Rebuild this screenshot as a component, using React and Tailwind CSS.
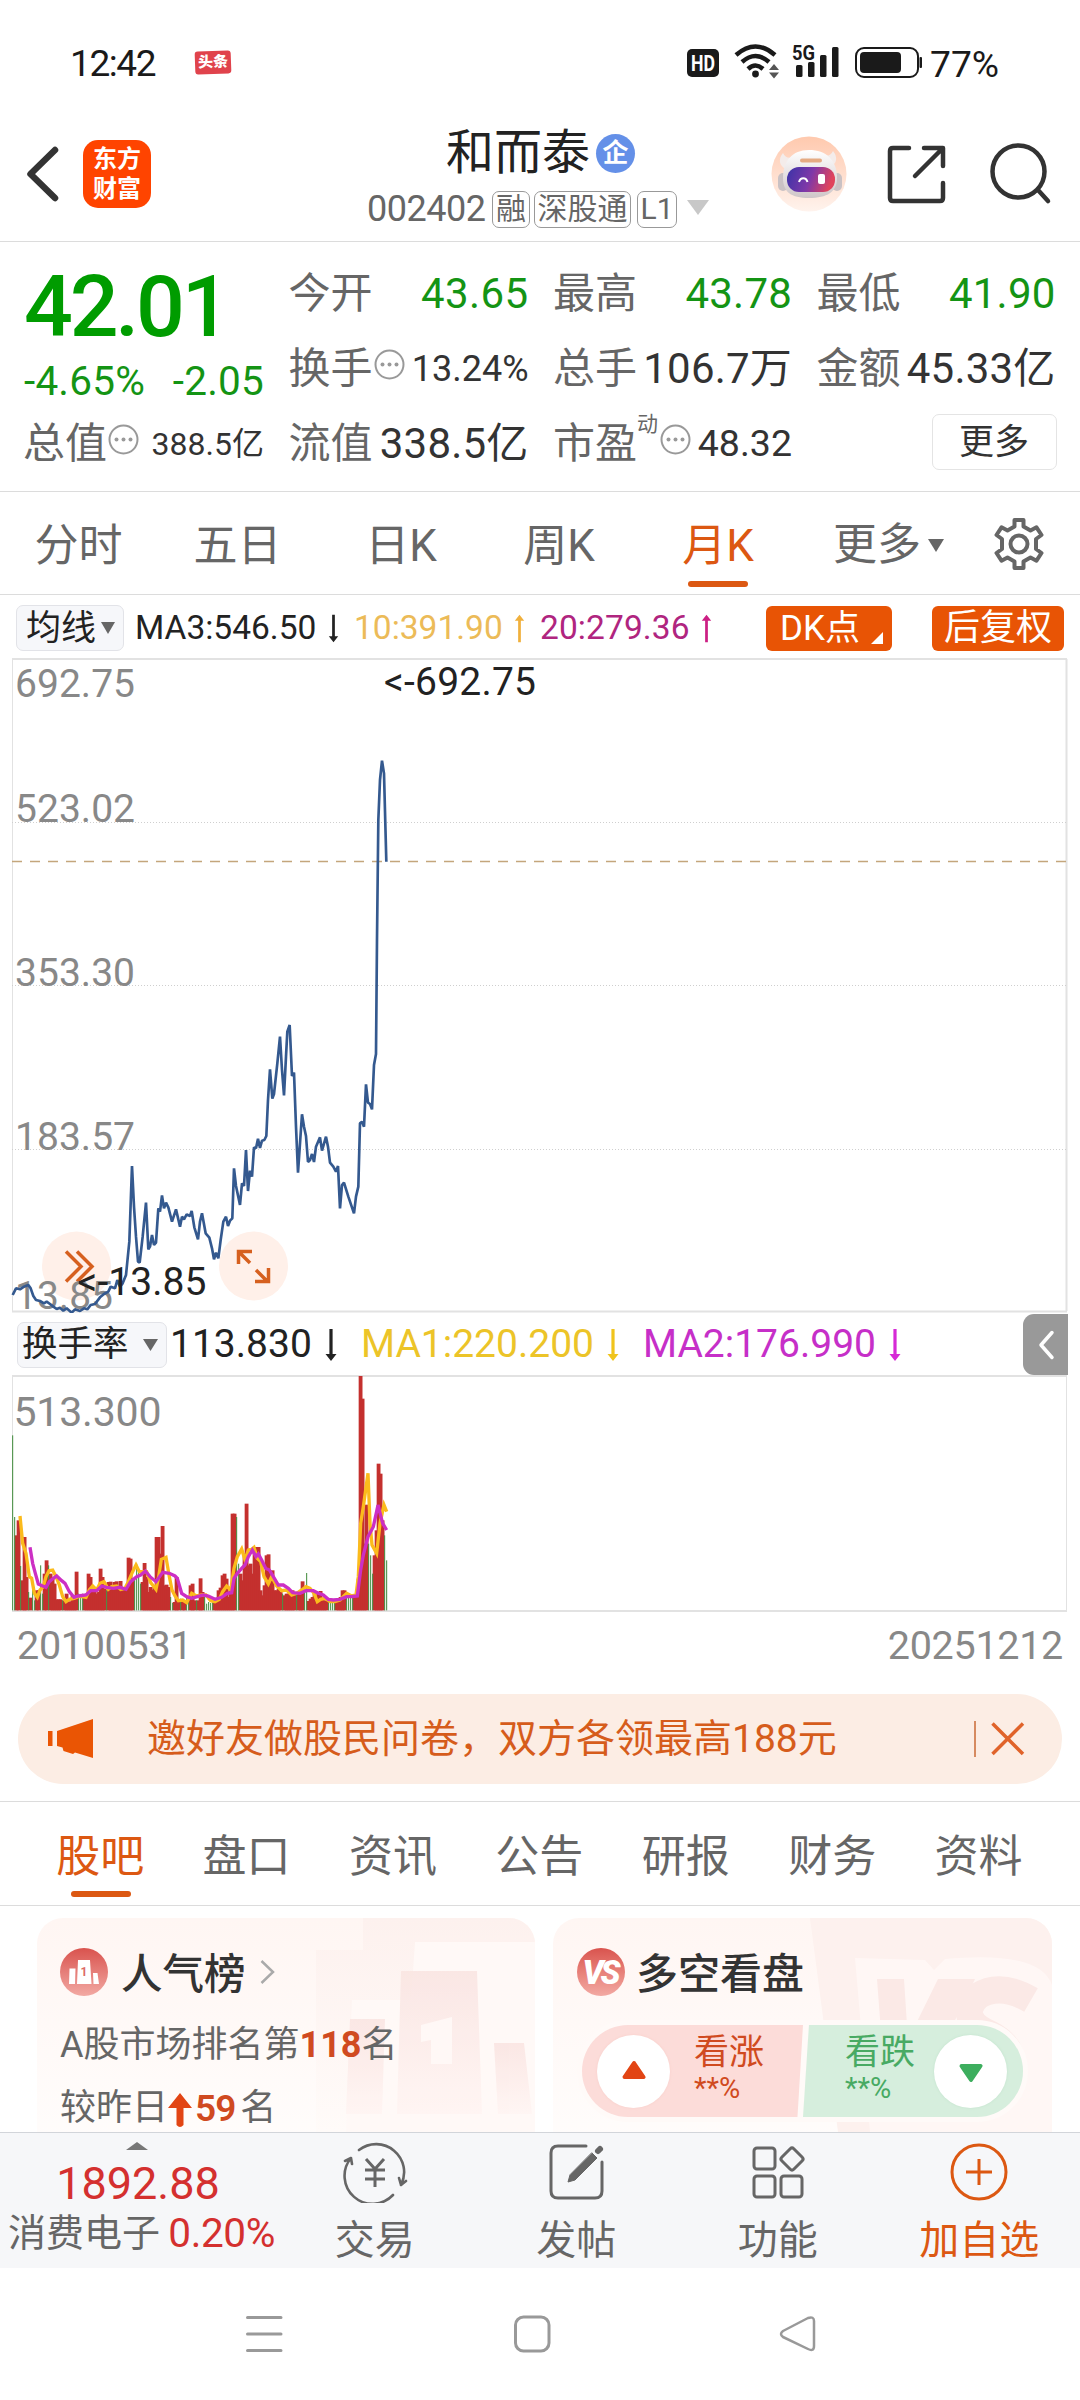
// monthly closes, drawn at 3x and scaled down
const priceLine =
  '38,1065 48,1045 60,1048 72,1040 85,1035 92,1045 100,1068 108,1080 120,1083 132,1090 140,1085 150,1092 160,1100 170,1107 180,1103 190,1112 200,1105 215,1118 225,1108 240,1113 252,1105 262,1108 272,1095 285,1092 300,1072 312,1062 325,1055 332,1040 345,1045 352,1020 360,1040 368,1030 378,1005 388,905 396,678 402,800 408,890 414,965 419,968 428,890 438,788 445,928 450,920 456,885 462,915 468,908 475,805 480,815 486,766 492,805 498,788 505,802 516,845 528,808 540,860 546,830 552,838 560,823 570,828 575,813 583,862 594,898 600,845 606,820 617,880 628,893 636,925 642,958 648,938 655,955 662,900 670,845 678,830 684,858 690,842 697,835 702,685 708,738 720,795 726,730 732,738 738,630 744,753 750,692 756,710 762,622 768,625 774,596 780,624 786,602 793,600 799,588 804,480 810,388 817,476 822,462 832,370 840,290 846,390 852,466 858,350 862,275 869,255 876,408 882,398 888,560 894,698 900,610 906,523 912,560 918,588 924,666 930,660 936,642 942,666 948,620 960,592 966,632 978,590 984,620 990,668 1000,680 1008,695 1014,678 1020,805 1026,735 1032,728 1045,770 1062,820 1068,770 1075,740 1080,550 1086,545 1092,560 1098,433 1104,488 1110,492 1116,508 1122,375 1128,342 1131,0 1135,-360 1140,-480 1146,-538 1152,-500 1159,-235'

// one value per month, negative = falling month (green)
const turnover = [
  -525, -280, 225, 270, -133, 90, 220, 100, -55, 38, -70, -30, 60, 60, -135, -50, 110, 150, -135, 110,
  100, 80, 33, 33, 33, -30, 30, 50, 25, 27, 45, 40, 116, -50, -40, -50, 45, 50, 110, 100,
  60, 60, 50, 55, 125, 100, 65, -60, 85, 86, 70, 85, 87, 70, 88, 60, 65, 62, 158, 155,
  95, -100, -140, -125, -80, 85, 142, 100, 55, 70, 62, 75, 220, 220, 170, 253, 75, 77, 70, -40,
  -22, 25, 100, 30, -35, 30, 30, -45, -25, 75, 80, 30, -30, 30, 96, 55, -40, -20, -25, -22,
  -25, 30, 35, 60, 68, 105, 110, 95, 40, 60, 290, 290, -280, -140, 110, 90, 170, 320, 135, 140,
  110, 185, 190, 190, 60, 45, 75, 165, 168, 115, 120, 60, 60, 65, 55, -50, 45, 50, 50, 50,
  60, 50, -55, 50, 60, 87, -60, -112, 28, 35, 40, 55, 30, 55, 58, 35, 30, 28, -30, -25,
  -22, -22, 25, 35, 40, 60, 60, -55, -50, -45, -40, 40, 45, 95, 703, 635, 200, 317, -200, -165,
  -110, 165, 240, 440, 410, 270, -225, -150,
]

const ma1Line =
  '60,618 68,700 78,730 88,800 95,805 103,850 112,862 120,840 130,830 138,800 147,782 158,780 168,800 178,825 188,860 198,875 208,868 222,865 235,860 245,860 258,862 268,840 278,828 290,840 300,820 312,815 325,838 335,830 350,828 362,838 375,835 385,815 398,785 408,765 418,785 428,785 440,785 452,818 462,830 468,838 476,800 484,748 498,742 508,800 516,840 525,858 535,872 548,870 560,878 575,850 590,858 605,855 618,855 632,872 645,875 658,868 668,845 680,828 692,840 702,775 712,740 725,717 735,750 745,720 755,718 762,712 772,745 782,755 792,800 805,822 815,800 830,828 845,842 860,840 875,855 890,850 905,840 918,830 930,835 942,850 952,875 962,868 975,865 990,875 1005,875 1020,870 1040,850 1055,858 1068,855 1075,800 1082,640 1090,590 1104,490 1110,640 1116,705 1130,730 1140,640 1152,585 1160,605'
const ma2Line =
  '90,712 98,760 106,790 115,822 128,828 138,832 148,815 160,805 170,798 185,812 195,820 208,845 222,862 235,858 258,855 272,842 290,842 305,828 320,832 340,835 360,832 378,838 392,815 410,800 422,795 436,783 450,800 468,815 488,787 508,790 525,798 532,805 545,850 560,860 575,865 592,860 610,855 625,858 645,868 665,862 682,850 695,848 702,805 712,790 725,775 735,765 745,740 757,720 768,740 775,732 785,750 797,775 808,780 820,800 835,825 850,825 865,835 878,848 900,850 918,842 940,842 955,850 970,855 985,868 1000,870 1020,868 1040,860 1055,860 1072,858 1082,780 1090,735 1104,680 1120,650 1134,585 1148,640 1160,660'

const chartTabs = [
  { label: '分时', width: 'w-[157px]' },
  { label: '五日', width: 'w-[161px]' },
  { label: '日K', width: 'w-[166px]' },
  { label: '周K', width: 'w-[150px]' },
  { label: '月K', width: 'w-[168px]', active: true },
]

const infoTabs = ['股吧', '盘口', '资讯', '公告', '研报', '财务', '资料']

function StatusBar() {
  return (
    <div className="flex h-[84px] items-end">
      <div className="ml-[70px] w-[125px] text-[37px] leading-[40px] tracking-[-1.4px] text-[#1a1a1a]">12:42</div>
      <div className="mb-[10px] flex h-[23px] w-[36px] -rotate-2 items-center justify-center rounded-[3px] bg-[#e0434c] text-[15px] font-black leading-none text-white">头条</div>
      <svg className="ml-[456px]" width="322" height="84" viewBox="687 0 322 84" fill="#1a1a1a">
        <rect x="687" y="49" width="32" height="28" rx="5" />
        <text x="703" y="71" textAnchor="middle" fill="#fff" fontSize="22" fontWeight="700" textLength="24" lengthAdjust="spacingAndGlyphs">HD</text>
        <g fill="none" stroke="#1a1a1a" strokeWidth="4.500">
          <path d="M736 55 Q755.500 38 775 55" />
          <path d="M742 62 Q755.500 50 769 62" />
          <path d="M748 69 Q755.500 62 763 69" />
        </g>
        <circle cx="755.5" cy="74" r="3.4" />
        <path d="M769 70l5-6 5 6zM769 72.500l5 6 5-6z" fill="#555" />
        <text x="792" y="60" fontSize="20" fontWeight="700" textLength="23" lengthAdjust="spacingAndGlyphs">5G</text>
        <rect x="796" y="65" width="6.500" height="12" rx="1.500" />
        <rect x="808" y="62" width="6.500" height="15" rx="1.500" />
        <rect x="820" y="55" width="6.500" height="22" rx="1.500" />
        <rect x="832" y="47" width="6.500" height="30" rx="1.500" />
        <rect x="856" y="48" width="62" height="29" rx="8" fill="none" stroke="#1a1a1a" strokeWidth="2" />
        <rect x="860" y="52" width="41" height="21" rx="4" />
        <rect x="919.500" y="57" width="2.500" height="11" rx="1" />
        <text x="930" y="76.500" fontSize="37.500" textLength="69" lengthAdjust="spacingAndGlyphs">77%</text>
      </svg>
    </div>
  )
}

function RobotAvatar() {
  return (
    <svg width="76" height="76" viewBox="0 0 76 76">
      <defs>
        <linearGradient id="robotBg" x1="0" y1="0" x2="0" y2="1">
          <stop offset="0" stopColor="#ffc9ae" />
          <stop offset="1" stopColor="#fff3ed" />
        </linearGradient>
        <linearGradient id="visor" x1="0" y1="0" x2="1" y2="0.2">
          <stop offset="0" stopColor="#3a33a8" />
          <stop offset="0.55" stopColor="#7f38a8" />
          <stop offset="1" stopColor="#e0435c" />
        </linearGradient>
        <linearGradient id="helmet" x1="0" y1="0" x2="0" y2="1">
          <stop offset="0" stopColor="#ffffff" />
          <stop offset="1" stopColor="#cfc6c8" />
        </linearGradient>
      </defs>
      <circle cx="38" cy="38" r="37.500" fill="url(#robotBg)" />
      <path d="M12 17c-5 6-4 13 3 16l8-12c-6 2-9 0-11-4zM62 15c5 6 4 13-3 16l-8-12c6 2 9 0 11-4z" fill="#f4ecea" />
      <rect x="7" y="37" width="10" height="18" rx="5" fill="#c9c1c4" />
      <rect x="61" y="37" width="10" height="18" rx="5" fill="#c9c1c4" />
      <path d="M12 42c0-17 9-28 26-28s28 10 28 28c0 14-10 20-28 20S12 56 12 42z" fill="url(#helmet)" />
      <rect x="29" y="22.500" width="22" height="4" rx="2" fill="#e5ab83" />
      <rect x="16" y="31" width="48" height="25" rx="12" fill="url(#visor)" />
      <path d="M28 46c1.500-5 7-5 8.500 0" fill="none" stroke="#fff" strokeWidth="2" />
      <rect x="47" y="38" width="7" height="10" rx="2" fill="#fff" />
    </svg>
  )
}

function Header() {
  return (
    <div className="flex h-[158px] border-b border-[#dcdcdc]">
      <svg className="ml-[22px] mt-[56px]" width="42" height="68" viewBox="0 0 42 68" fill="none" stroke="#333" strokeWidth="6.500" strokeLinecap="round" strokeLinejoin="round">
        <path d="M33 10L8.500 34L33 58" />
      </svg>
      <div className="ml-[19px] mt-[56px] flex h-[68px] w-[68px] flex-col items-center justify-center rounded-[15px] bg-[#ff4400] text-[24px] font-bold leading-[30px] text-white">
        <span>东方</span>
        <span>财富</span>
      </div>
      <div className="ml-[217px] mt-[42px] w-[350px]">
        <div className="flex h-[54px] items-center pl-[78px]">
          <span className="text-[48px] leading-none text-[#222]">和而泰</span>
          <span className="ml-[6px] flex h-[39px] w-[39px] items-center justify-center rounded-full bg-[#6490e8] text-[26px] font-bold leading-none text-white">企</span>
        </div>
        <div className="mt-[10px] flex h-[38px] items-center text-[30px] leading-none text-[#666]">
          <span className="-ml-px w-[125px] text-[36px] tracking-[-0.5px]">002402</span>
          <span className="flex h-[37px] w-[38px] items-center justify-center rounded-[7px] border border-[#999]">融</span>
          <span className="ml-[4px] flex h-[37px] w-[97px] items-center justify-center whitespace-nowrap rounded-[7px] border border-[#999]">深股通</span>
          <span className="ml-[6px] flex h-[37px] w-[40px] items-center justify-center rounded-[7px] border border-[#999]">L1</span>
          <svg className="ml-[10px] mt-[-3px]" width="22" height="15" fill="#c8c8c8"><path d="M0 0H22L11 15z" /></svg>
        </div>
      </div>
      <div className="ml-[53px] mt-[52px]"><RobotAvatar /></div>
      <svg className="ml-[38px] mt-[58px]" width="64" height="64" viewBox="885 142 64 64" fill="none" stroke="#333" strokeWidth="4.500" strokeLinecap="round" strokeLinejoin="round">
        <path d="M909 148H893Q890 148 890 151V198Q890 201 893 201H940Q943 201 943 198V183M924 148H943V166M942 149L915 176" />
      </svg>
      <svg className="ml-[37px] mt-[58px]" width="68" height="64" viewBox="986 142 68 64" fill="none" stroke="#333" strokeWidth="4.500" strokeLinecap="round">
        <circle cx="1018.500" cy="171.500" r="26" />
        <path d="M1038 190L1048 201" />
      </svg>
    </div>
  )
}

function Hint() {
  return (
    <svg className="mb-[8px] ml-px shrink-0" width="31" height="31" viewBox="0 0 31 31">
      <circle cx="15.500" cy="15.500" r="14" fill="none" stroke="#999" strokeWidth="2" />
      <g fill="#999"><circle cx="8.500" cy="15.500" r="2" /><circle cx="15.500" cy="15.500" r="2" /><circle cx="22.500" cy="15.500" r="2" /></g>
    </svg>
  )
}

function Stat({ label, children, hint, valueClass }) {
  return (
    <div className="flex h-[75px] items-center justify-between leading-none">
      <span className="-ml-px flex items-center whitespace-nowrap text-[42px] text-[#666]">
        {label}
        {hint && <Hint />}
      </span>
      <span className={valueClass}>{children}</span>
    </div>
  )
}

function Quote() {
  return (
    <div className="grid h-[250px] grid-cols-[240px_239px_238px_238px] gap-x-[25.500px] border-b border-[#dcdcdc] pl-[24px] pt-[14px] whitespace-nowrap">
      <div>
        <div className="flex h-[101px] items-center text-[86px] font-medium leading-none tracking-[-3.2px] text-[#009c00]">42.01</div>
        <div className="flex h-[49px] items-center justify-between text-[40.500px] leading-none tracking-[0.2px] text-[#149414]">
          <span>-4.65%</span>
          <span>-2.05</span>
        </div>
        <Stat label="总值" hint valueClass="text-[32px] text-[#333]">388.5亿</Stat>
      </div>
      <div>
        <Stat label="今开" valueClass="text-[42px] text-[#149414] tracking-[0.4px]">43.65</Stat>
        <Stat label="换手" hint valueClass="text-[36px] text-[#333]">13.24%</Stat>
        <Stat label="流值" valueClass="text-[42px] text-[#333] tracking-[0.2px]">338.5亿</Stat>
      </div>
      <div>
        <Stat label="最高" valueClass="text-[42px] text-[#149414] tracking-[0.2px]">43.78</Stat>
        <Stat label="总手" valueClass="text-[42px] text-[#333] tracking-[0.2px]">106.7万</Stat>
        <Stat label={<>市盈<span className="mb-[38px] w-[22px] text-[21px]">动</span></>} hint valueClass="text-[37.500px] text-[#333]">48.32</Stat>
      </div>
      <div>
        <Stat label="最低" valueClass="text-[42px] text-[#149414] tracking-[0.2px]">41.90</Stat>
        <Stat label="金额" valueClass="text-[42px] text-[#333] tracking-[0.2px]">45.33亿</Stat>
        <div className="flex h-[72px] items-center justify-end">
          <div className="-mr-[1px] flex h-[56px] w-[125px] items-center justify-center rounded-[7px] border border-[#e4e4e4] text-[35px] leading-none text-[#333]">更多</div>
        </div>
      </div>
    </div>
  )
}

function ChartTabs() {
  return (
    <div className="flex h-[103px] border-b border-[#dcdcdc] text-[44px] leading-none text-[#666]">
      {chartTabs.map((t) => (
        <div key={t.label} className={`${t.width} flex shrink-0 flex-col items-center justify-between pb-[7px] pt-[32px]`}>
          <span className={t.active ? 'text-[#dc5812]' : ''}>{t.label}</span>
          {t.active && <span className="mr-[1px] h-[6px] w-[60px] rounded-full bg-[#dc5812]" />}
        </div>
      ))}
      <div className="ml-[31px] flex h-[106px] items-center">
        <span>更多</span>
        <svg className="ml-[7px]" width="16" height="13" fill="#666"><path d="M0 0H16L8 13z" /></svg>
      </div>
      <svg className="ml-[48px] mt-[25px]" width="54" height="54" viewBox="0 0 54 54" fill="none" stroke="#666" strokeWidth="4" strokeLinejoin="round">
        <path d="M22.500 3h9v6.500l7 4 6-3.200 5 7.700-5.500 4v10l5.500 4-5 7.700-6-3.200-7 4V51h-9v-6.500l-7-4-6 3.200-5-7.700 5.500-4V22L4.500 18l5-7.700 6 3.200 7-4z" />
        <circle cx="27" cy="27" r="8.500" />
      </svg>
    </div>
  )
}

function Arrow({ up, className }) {
  return (
    <svg className={className} width="12" height="34" viewBox="0 0 12 34">
      <g transform={up ? 'rotate(180 6 17)' : undefined}>
        <path d="M4.400 1h3.200v26H4.400zM0.500 26h11L6 33z" fill="currentColor" />
      </g>
    </svg>
  )
}

function MaBar() {
  return (
    <div className="flex h-[62px] items-center whitespace-nowrap pl-[16px] pt-[2px] text-[33.500px] leading-none">
      <div className="flex h-[46px] w-[108px] items-center rounded-[7px] border border-[#e2e3e8] bg-[#f6f7fa] pl-[9px] text-[35px] text-[#222]">
        均线
        <svg className="ml-[5px]" width="14" height="12" fill="#666"><path d="M0 0H14L7 12z" /></svg>
      </div>
      <span className="ml-[11px] w-[193px] text-[#222]">MA3:546.50</span>
      <Arrow className="h-[29px] w-[11px] text-[#222]" />
      <span className="ml-[15px] w-[160px] text-[#ecbb58]">10:391.90</span>
      <Arrow up className="h-[29px] w-[11px] text-[#f0b03c]" />
      <span className="ml-[15px] w-[161px] tracking-[0.100px] text-[#b0257f]">20:279.36</span>
      <Arrow up className="h-[29px] w-[11px] text-[#cc1f84]" />
      <div className="ml-[54px] flex h-[45px] w-[126px] items-center rounded-[6px] bg-[#e85405] pl-[14px] text-[35px] text-white">
        DK点
        <svg className="ml-[11px] mt-[20px]" width="12" height="12" fill="#fff"><path d="M12 0V12H0z" /></svg>
      </div>
      <div className="ml-[40px] flex h-[45px] w-[132px] items-center justify-center rounded-[6px] bg-[#e85405] text-[36px] text-white">后复权</div>
    </div>
  )
}

function PriceChart() {
  return (
    <svg className="block" width="1080" height="655" viewBox="0 658 1080 655">
      <g stroke="#e2e2e2" strokeWidth="2" fill="none">
        <path d="M12 659H1067M12 1311.500H1067M1066.500 659V1311" />
        <path d="M12.500 659V1311" strokeWidth="1" />
      </g>
      <g stroke="#cfcfcf" strokeWidth="1" strokeDasharray="1 2">
        <path d="M12 822.500H1067M12 985.500H1067M12 1149.500H1067" />
      </g>
      <path d="M12 861.500H1066" stroke="#c4a67c" strokeWidth="1.300" strokeDasharray="10 8" />
      <circle cx="76.500" cy="1266" r="34.500" fill="#fff0e9" />
      <circle cx="253.500" cy="1266" r="34.500" fill="#fff0e9" />
      <g fill="none" stroke="#d6601f" strokeWidth="3.500">
        <path d="M66 1251.500L81 1266.500L66 1281.500M77 1251.500L92 1266.500L77 1281.500" />
        <path d="M238.500 1264V1251.500H252M239 1252L250 1263M256 1270L268 1282M255 1281.500H268.500V1268" />
      </g>
      <g fill="#888" fontSize="39">
        <text x="15" y="697" textLength="120">692.75</text>
        <text x="15" y="822" textLength="120">523.02</text>
        <text x="15" y="986" textLength="120">353.30</text>
        <text x="15" y="1150" textLength="120">183.57</text>
        <text x="15" y="1308.500" textLength="98">13.85</text>
      </g>
      <polyline transform="translate(0 940) scale(0.33333)" points={priceLine} fill="none" stroke="#34598f" strokeWidth="8" strokeLinejoin="bevel" />
      <g fill="#222" fontSize="39">
        <text x="384" y="695" textLength="152">&lt;-692.75</text>
        <text x="77.500" y="1295" textLength="129">&lt;-13.85</text>
      </g>
    </svg>
  )
}

function IndicatorBar() {
  return (
    <div className="flex h-[62px] items-center whitespace-nowrap pl-[17px] pt-px text-[39px] leading-none">
      <div className="flex h-[46px] w-[150px] items-center rounded-[7px] border border-[#e2e3e8] bg-[#f6f7fa] pl-[4px] text-[35.500px] text-[#222]">
        换手率
        <svg className="ml-[14px]" width="15" height="12" fill="#666"><path d="M0 0H15L7.500 12z" /></svg>
      </div>
      <span className="ml-[3px] w-[155px] text-[#222]">113.830</span>
      <Arrow className="text-[#222]" />
      <span className="ml-[24px] w-[246px] text-[#ecc428]">MA1:220.200</span>
      <Arrow className="text-[#f0c41c]" />
      <span className="ml-[24px] w-[246px] text-[#c62fc8]">MA2:176.990</span>
      <Arrow className="text-[#d62ad6]" />
      <div className="ml-[122px] flex h-[61px] w-[45px] items-center justify-center rounded-l-[11px] bg-[#999]">
        <svg width="18" height="30" viewBox="0 0 18 30" fill="none" stroke="#fff" strokeWidth="3.500" strokeLinecap="round" strokeLinejoin="round"><path d="M15 2.500L4 15L15 27.500" /></svg>
      </div>
    </div>
  )
}

function TurnoverChart() {
  return (
    <svg className="block" width="1080" height="238" viewBox="0 1375 1080 238">
      <g stroke="#e2e2e2" strokeWidth="2" fill="none">
        <path d="M12 1376H1067M12 1611H1067" />
        <path d="M12.500 1376V1611M1066.500 1376V1611" strokeWidth="1" />
      </g>
      <text x="13.500" y="1426" fill="#888" fontSize="41" textLength="148">513.300</text>
      <g transform="translate(0 1310) scale(0.33333)">
        {turnover.map((v, i) =>
          v > 0 ? <rect key={i} x={32 + 6 * i} y={901 - v} width="11.500" height={v} fill="#c4302e" /> : null
        )}
        {turnover.map((v, i) =>
          v < 0 ? <rect key={i} x={36.500 + 6 * i} y={901 + v} width="3" height={-v} fill="#3f8a3a" /> : null
        )}
        <polyline points={ma1Line} fill="none" stroke="#fbbb1c" strokeWidth="10" />
        <polyline points={ma2Line} fill="none" stroke="#cc2fc4" strokeWidth="10" />
      </g>
    </svg>
  )
}

function Banner() {
  return (
    <div className="mx-[18px] flex h-[90px] items-center rounded-full bg-[#fcede4] text-[39px] leading-none text-[#d65c1b]">
      <svg className="ml-[30px]" width="46" height="40" viewBox="0 0 46 40" fill="#ea5504">
        <rect x="0" y="12" width="4.500" height="15" />
        <path d="M9 12L45 0V39L27 33.500L25 35L15.500 32L14.500 28.500L9 27z" />
      </svg>
      <span className="ml-[53px] w-[827px] whitespace-nowrap">邀好友做股民问卷，双方各领最高188元</span>
      <span className="h-[36px] w-[1.500px] bg-[#d68a60]" />
      <svg className="ml-[15px]" width="34" height="34" viewBox="0 0 34 34" stroke="#e0632a" strokeWidth="3.500"><path d="M1.500 1.500L32 32M32 1.500L1.500 32" /></svg>
    </div>
  )
}

function InfoTabs() {
  return (
    <div className="mt-[17px] flex h-[105px] border-y border-[#dcdcdc] pl-[27px] text-[44px] leading-none text-[#666]">
      {infoTabs.map((t, i) => (
        <div key={t} className="flex w-[146.400px] flex-col items-center justify-between pb-[8px] pt-[33px]">
          <span className={i === 0 ? 'text-[#dc5812]' : ''}>{t}</span>
          {i === 0 && <span className="ml-[2px] h-[6px] w-[60px] rounded-full bg-[#dc5812]" />}
        </div>
      ))}
    </div>
  )
}

function RankCard() {
  return (
    <div className="relative h-[240px] w-[498px] overflow-hidden rounded-[26px] bg-gradient-to-b from-[#fff6f3] to-[#fffdfc] leading-none text-[#666]">
      <svg className="absolute left-0 top-0" width="498" height="214" viewBox="37 1918 498 214">
        <defs>
          <linearGradient id="rankFade" x1="0" y1="0" x2="0" y2="1">
            <stop offset="0" stopColor="#fae4e1" />
            <stop offset="1" stopColor="#fff5f3" />
          </linearGradient>
          <linearGradient id="rankEdge" x1="0" y1="0" x2="0" y2="1">
            <stop offset="0" stopColor="#fdf1ee" />
            <stop offset="1" stopColor="#fffbf9" />
          </linearGradient>
        </defs>
        <path d="M363 1918H535V2132H316V1950H363z" fill="url(#rankEdge)" />
        <path d="M415 1942H537V2132H346L352 2000H411z" fill="#fff9f7" />
        <path d="M537 1942L542 2020V2132H552V1918H537z" fill="#fdf1ee" />
        <g fill="url(#rankFade)" opacity="0.85">
          <path d="M401 1971H477L482 2114H397z" />
          <path d="M350 2019H385L382 2114H346z" />
          <path d="M494 2043H524L532 2114H498z" />
        </g>
        <path d="M421 2025L452 2017V2064H431V2040L421 2042z" fill="#fff8f6" />
      </svg>
      <div className="relative ml-[23px] mt-[30px] flex h-[48px] items-center">
        <svg width="48" height="48" viewBox="0 0 48 48">
          <defs>
            <linearGradient id="badge" x1="0" y1="0" x2="0" y2="1">
              <stop offset="0" stopColor="#d9534e" />
              <stop offset="1" stopColor="#f2a9a3" />
            </linearGradient>
          </defs>
          <circle cx="24" cy="24" r="24" fill="url(#badge)" />
          <path d="M18 12H30L31.500 36H17zM9.500 20.500H15.500L15 36H9zM33 25H37.500L39 36H33.500z" fill="#fff" />
          <text x="24" y="28" textAnchor="middle" fontSize="12" fontWeight="700" fill="#dd6a64">1</text>
        </svg>
        <span className="ml-[13px] mt-[6px] text-[41.500px] font-medium text-[#333]">人气榜</span>
        <svg className="ml-[14px]" width="15" height="24" viewBox="0 0 15 24" fill="none" stroke="#aaa" strokeWidth="2.500"><path d="M1.500 1L13 12L1.500 23" /></svg>
      </div>
      <div className="relative ml-[23px] mt-[31px] flex h-[36px] items-center whitespace-nowrap text-[36px]">
        A股市场排名第<b className="text-[#d04a20]">118</b>名
      </div>
      <div className="relative ml-[23px] mt-[27px] flex h-[36px] items-center text-[36px]">
        较昨日
        <svg className="mt-[4px]" width="24" height="34" viewBox="0 0 24 34" fill="#e24514"><path d="M12 0L24 15H15.500V32Q12 36 8.500 32V15H0z" /></svg>
        <b className="ml-[3px] text-[37px] font-semibold tracking-[-1px] text-[#d04a20]">59</b>
        <span className="ml-[5px]">名</span>
      </div>
    </div>
  )
}

function VoteCard() {
  return (
    <div className="relative h-[240px] w-[499px] overflow-hidden rounded-[26px] bg-gradient-to-b from-[#fff6f3] to-[#fffdfc] leading-none">
      <svg className="absolute left-0 top-0" width="499" height="214" viewBox="553 1918 499 214">
        <path d="M810 1918H1052V2132H838z" fill="#fdf1ee" />
        <path d="M855 1958L925 1960L934 1970L945 1959Q1040 1950 1052 1985V2132H870z" fill="#fff7f5" />
        {/* oversized mark: slanted V, then the S curve */}
        <path d="M877 1979H904L908 2040L938 1979H975L930 2072H884z" fill="#fbe9e6" />
        <path d="M1031 2000Q1000 1982 978 1996Q956 2018 990 2034Q1020 2050 1008 2076" fill="none" stroke="#fbe9e6" strokeWidth="27" />
      </svg>
      <div className="relative ml-[24px] mt-[30px] flex h-[48px] items-center">
        <span className="flex h-[48px] w-[48px] items-center justify-center rounded-full bg-gradient-to-b from-[#d9534e] to-[#f2a9a3] pr-[2px] text-[33px] font-black italic tracking-[-3px] text-white">VS</span>
        <span className="ml-[11px] mt-[6px] text-[42px] font-medium text-[#333]">多空看盘</span>
      </div>
      <div className="relative ml-[24px] mt-[24px] flex h-[102px] w-[451px] rounded-full border-[5px] border-[#fffaf8] bg-[#fffaf8]">
        <div className="flex w-[221px] items-center rounded-l-full bg-[#fcdcd9] pl-[15px] text-[#d04a20] [clip-path:polygon(0_0,100%_0,97.500%_100%,0_100%)]">
          <span className="flex h-[73px] w-[73px] items-center justify-center rounded-full bg-white shadow-[0_0_3px_#f8cfca]">
            <svg className="mb-[3px]" width="24" height="20" viewBox="0 0 24 20" fill="#e24514" stroke="#e24514" strokeWidth="4" strokeLinejoin="round"><path d="M12 3L21.500 17H2.500z" /></svg>
          </span>
          <span className="mb-[4px] ml-[24px] flex flex-col gap-[4px] text-[35px]">看涨<span className="text-[29px]">**%</span></span>
        </div>
        <div className="flex w-[220px] items-center rounded-r-full bg-[#d6eedd] pl-[42px] text-[#48aa63] [clip-path:polygon(2.700%_0,100%_0,100%_100%,0_100%)]">
          <span className="mb-[4px] flex w-[70px] flex-col gap-[4px] text-[35px]">看跌<span className="text-[29px]">**%</span></span>
          <span className="ml-[19px] flex h-[73px] w-[73px] items-center justify-center rounded-full bg-white shadow-[0_0_3px_#c3e3cd]">
            <svg className="mt-[4px]" width="24" height="20" viewBox="0 0 24 20" fill="#3dae5e" stroke="#3dae5e" strokeWidth="4" strokeLinejoin="round"><path d="M12 17L21.500 3H2.500z" /></svg>
          </span>
        </div>
      </div>
    </div>
  )
}

function Action({ label, active, children }) {
  return (
    <div className={`flex w-[201.500px] flex-col items-center pt-[8px] ${active ? 'text-[#dc5812]' : 'text-[#666]'}`}>
      <svg width="66" height="62" viewBox="-33 -31 66 62" fill="none" stroke="currentColor" strokeWidth="3" strokeLinecap="round" strokeLinejoin="round">{children}</svg>
      <span className="mt-[18px] text-[40px] leading-none">{label}</span>
    </div>
  )
}

function BottomBar() {
  return (
    <div className="flex h-[136px] border-t border-[#d2d5da] bg-[#f6f7f9] leading-none">
      <div className="flex w-[274px] flex-col items-center whitespace-nowrap">
        <svg className="mt-[9px]" width="22" height="8" fill="#777"><path d="M11 0L22 8H0z" /></svg>
        <span className="ml-[2px] mt-[11px] text-[45px] text-[#d4302f]">1892.88</span>
        <div className="mt-[7px] flex w-full items-center justify-between pl-[8px] text-[38px] text-[#666]">
          消费电子<span className="-mr-px text-[40.500px] tracking-[-0.400px] text-[#d4302f]">0.20%</span>
        </div>
      </div>
      <Action label="交易">
        <path d="M-16 -22A28 28 0 0 1 26 13L31 9M26 13L24 6M18 23A28 28 0 0 1 -24 -14L-30 -11M-24 -14L-23 -8" strokeWidth="2.600" />
        <path d="M-9 -13L0 -3L9 -13M0 -3V15M-10 -2H10M-10 7H10" strokeLinecap="butt" />
      </Action>
      <Action label="发帖">
        <path d="M10 -26H-18Q-25 -26 -25 -19V19Q-25 26 -18 26H19Q26 26 26 19V-10" />
        <path d="M16 -19L21 -14L-1 8L-8 10L-6 3z" fill="currentColor" strokeWidth="1" />
        <path d="M22 -21L24 -23" strokeWidth="6" />
      </Action>
      <Action label="功能">
        <rect x="-24" y="-24" width="21" height="21" rx="3" />
        <rect x="-24" y="4" width="21" height="21" rx="3" />
        <rect x="3" y="4" width="21" height="21" rx="3" />
        <rect x="5.500" y="-21.500" width="17" height="17" rx="2.500" transform="rotate(45 14 -13)" />
      </Action>
      <Action label="加自选" active>
        <circle cx="0" cy="0" r="27" />
        <path d="M-13 0H13M0 -13V13" strokeLinecap="butt" />
      </Action>
    </div>
  )
}

export default function App() {
  return (
    <div className="flex h-[2400px] w-[1080px] flex-col overflow-hidden bg-white font-['Roboto','Noto_Sans_CJK_SC',sans-serif]">
      <StatusBar />
      <Header />
      <Quote />
      <ChartTabs />
      <div className="h-[1px]" />
      <MaBar />
      <PriceChart />
      <IndicatorBar />
      <TurnoverChart />
      <div className="flex h-[81px] items-center justify-between pb-[16px] pl-[17px] pr-[17px] text-[39.500px] leading-none tracking-[-0.300px] text-[#888]">
        <span>20100531</span>
        <span>20251212</span>
      </div>
      <Banner />
      <InfoTabs />
      <div className="flex h-[226px] gap-[18px] overflow-hidden pl-[37px] pt-[12px]">
        <RankCard />
        <VoteCard />
      </div>
      <BottomBar />
      <div className="flex h-[132px] items-center">
        <svg className="block" width="1080" height="132" viewBox="0 2268 1080 132" fill="none" stroke="#999" strokeWidth="3" strokeLinecap="round" strokeLinejoin="round">
          <path d="M247.500 2317.500H281M247.500 2334H281M247.500 2350.500H281" />
          <rect x="515.500" y="2317" width="33.500" height="34" rx="8" />
          <path d="M783 2331L808 2318Q814 2316 814 2321V2346Q814 2352 808 2349L783 2337Q779 2334 783 2331z" strokeWidth="2.500" />
        </svg>
      </div>
    </div>
  )
}
